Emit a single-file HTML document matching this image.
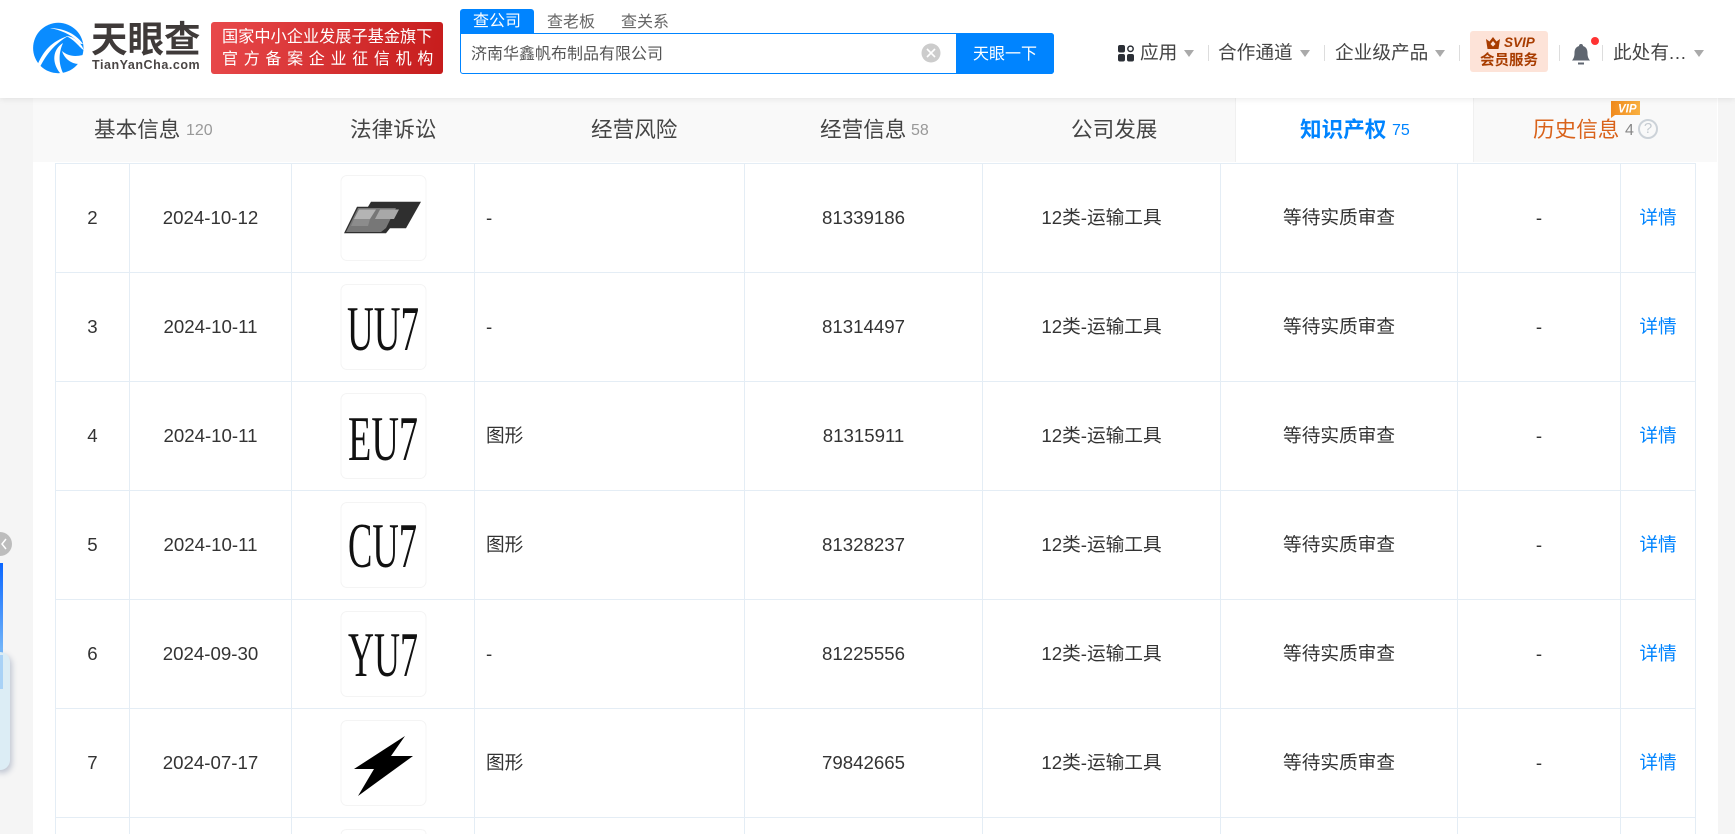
<!DOCTYPE html>
<html lang="zh">
<head>
<meta charset="utf-8">
<title>天眼查</title>
<style>
*{box-sizing:border-box}
html,body{margin:0;padding:0;width:1735px;height:834px;overflow:hidden;background:#f5f5f5}
body{position:relative;font-family:"Liberation Sans","Noto Sans CJK SC",sans-serif;color:#333}
.a{position:absolute;white-space:nowrap}
#hd{position:absolute;left:0;top:0;width:1735px;height:98px;background:#fff;box-shadow:0 1px 6px rgba(0,0,0,.09);z-index:5}
#card{position:absolute;left:33px;top:98px;width:1685px;height:736px;background:#fff}
#tabs{position:absolute;left:33px;top:98px;width:1684px;height:64px;background:#f9f9f9}
.tab{position:absolute;top:98px;font-size:21.6px;line-height:64px;color:#444;white-space:nowrap}
.num{position:absolute;top:98px;font-size:16px;line-height:66px;color:#999;white-space:nowrap}
#tw{position:absolute;left:55px;top:163px;width:1641px;height:671px;overflow:hidden}
table{width:1640px;border-collapse:collapse;table-layout:fixed;font-size:18.67px;color:#333}
td{border:1px solid #e4edf5;height:109px;padding:0 0 1px;text-align:center;vertical-align:middle}
td.c{padding-bottom:4px}
td.l{text-align:left;padding-left:11px}
td a{color:#0084ff;text-decoration:none}
tr.last td{height:16px;border-bottom:0;padding:0}
.nav{position:absolute;top:53px;transform:translateY(-50%);font-size:18.67px;color:#444;white-space:nowrap;line-height:24px}
.arr{position:absolute;top:50px;width:0;height:0;border-left:5.5px solid transparent;border-right:5.5px solid transparent;border-top:7px solid #aaa}
.sep{position:absolute;top:45px;width:1px;height:16px;background:#ddd}
</style>
</head>
<body>
<div id="card"></div>
<div id="tabs"></div>
<div class="a" style="left:1235px;top:98px;width:239px;height:64px;background:#fff;border-left:1px solid #f0f0f0;border-right:1px solid #f0f0f0"></div>

<div class="tab" style="left:94px">基本信息</div><div class="num" style="left:186px">120</div>
<div class="tab" style="left:350px">法律诉讼</div>
<div class="tab" style="left:591px">经营风险</div>
<div class="tab" style="left:820px">经营信息</div><div class="num" style="left:911px">58</div>
<div class="tab" style="left:1071px">公司发展</div>
<div class="tab" style="left:1300px;color:#0084ff;font-weight:700">知识产权</div><div class="num" style="left:1392px;color:#0084ff">75</div>
<div class="tab" style="left:1533px;color:#d9621a">历史信息</div><div class="num" style="left:1625px;color:#888">4</div>
<div class="a" style="left:1638px;top:119px;width:20px;height:20px;border:2px solid #ccd2d8;border-radius:50%;color:#c4cad0;font-size:15px;line-height:16px;text-align:center">?</div>
<svg class="a" style="left:1610px;top:100px" width="32" height="19" viewBox="0 0 32 19">
<defs><linearGradient id="v" x1="0" x2="1"><stop offset="0" stop-color="#f08a1d"/><stop offset="1" stop-color="#f9b040"/></linearGradient></defs>
<path d="M1 1H30V15H5L1 18Z" fill="url(#v)"/>
<text x="8" y="12.500" font-family="Liberation Sans" font-size="11.500" font-weight="700" font-style="italic" fill="#fff">VIP</text>
</svg>

<div id="tw">
<table>
<colgroup><col style="width:74px"><col style="width:162px"><col style="width:183px"><col style="width:270px"><col style="width:238px"><col style="width:238px"><col style="width:237px"><col style="width:163px"><col style="width:75px"></colgroup>
<tr><td>2</td><td>2024-10-12</td><td></td><td class="l">-</td><td>81339186</td><td class="c">12类-运输工具</td><td class="c">等待实质审查</td><td>-</td><td class="c"><a>详情</a></td></tr>
<tr><td>3</td><td>2024-10-11</td><td></td><td class="l">-</td><td>81314497</td><td class="c">12类-运输工具</td><td class="c">等待实质审查</td><td>-</td><td class="c"><a>详情</a></td></tr>
<tr><td>4</td><td>2024-10-11</td><td></td><td class="l c">图形</td><td>81315911</td><td class="c">12类-运输工具</td><td class="c">等待实质审查</td><td>-</td><td class="c"><a>详情</a></td></tr>
<tr><td>5</td><td>2024-10-11</td><td></td><td class="l c">图形</td><td>81328237</td><td class="c">12类-运输工具</td><td class="c">等待实质审查</td><td>-</td><td class="c"><a>详情</a></td></tr>
<tr><td>6</td><td>2024-09-30</td><td></td><td class="l">-</td><td>81225556</td><td class="c">12类-运输工具</td><td class="c">等待实质审查</td><td>-</td><td class="c"><a>详情</a></td></tr>
<tr><td>7</td><td>2024-07-17</td><td></td><td class="l c">图形</td><td>79842665</td><td class="c">12类-运输工具</td><td class="c">等待实质审查</td><td>-</td><td class="c"><a>详情</a></td></tr>
<tr class="last"><td></td><td></td><td></td><td></td><td></td><td></td><td></td><td></td><td></td></tr>
</table>
</div>

<svg class="a" style="left:0;top:0" width="1735" height="834" viewBox="0 0 1735 834">
<g fill="#fff" stroke="#f4f4f4" stroke-width="1">
<rect x="341" y="175.500" width="85" height="85" rx="6"/>
<rect x="341" y="284.500" width="85" height="85" rx="6"/>
<rect x="341" y="393.500" width="85" height="85" rx="6"/>
<rect x="341" y="502.500" width="85" height="85" rx="6"/>
<rect x="341" y="611.500" width="85" height="85" rx="6"/>
<rect x="341" y="720.500" width="85" height="85" rx="6"/>
<path d="M341 834V835.500Q341 829.500 347 829.500H420Q426 829.500 426 834" fill="none"/>
</g>
<path d="M371 201.700H421L406 228.300H390L386 233.300H344L357 206.700H368Z" fill="#2f2f2f"/>
<path d="M358 208H396L386 228L381 232H346Z" fill="#777"/>
<path d="M359 209.500H376L370 219H354Z" fill="#b4b4b4"/>
<path d="M380 209.500H399L394 219H375Z" fill="#a8a8a8"/>
<path d="M354 219H370L368 226H351Z" fill="#8c8c8c"/>
<g font-family="Liberation Serif" font-size="64" fill="#111">
<text x="347" y="350" textLength="72" lengthAdjust="spacingAndGlyphs">UU7</text>
<text x="348" y="460" textLength="70" lengthAdjust="spacingAndGlyphs">EU7</text>
<text x="348" y="567" textLength="69" lengthAdjust="spacingAndGlyphs">CU7</text>
<text x="348" y="676" textLength="70" lengthAdjust="spacingAndGlyphs">YU7</text>
</g>
<path d="M405 736L354 769H374L358 796L413 756H391Z" fill="#000"/>
</svg>

<!-- left floating -->
<div class="a" style="left:-12px;top:532px;width:24px;height:24px;border-radius:50%;background:#bdbdbd"></div>
<svg class="a" style="left:0;top:537px" width="8" height="14"><path d="M6 2L2 7L6 12" fill="none" stroke="#fff" stroke-width="1.500"/></svg>
<div class="a" style="left:0;top:563px;width:3px;height:95px;background:linear-gradient(#0a66ff,#7dbcf8)"></div>
<div class="a" style="left:-10px;top:652px;width:20px;height:118px;border-radius:10px;background:#dcedf5;box-shadow:2px 3px 6px rgba(70,90,130,.3)"></div>
<div class="a" style="left:0;top:655px;width:3px;height:34px;background:#a9d2f6"></div>

<div id="hd">
<svg class="a" style="left:0;top:0" width="90" height="90" viewBox="0 0 90 90">
<circle cx="58.300" cy="48" r="25.200" fill="#0a8cff"/>
<path d="M50 28C60 28 75 32 83 44C80 44 79 43 78 42C71 34 60 30 50 28Z" fill="#fff"/>
<path d="M78 42C81 44 83 47 83.500 50C79 47 75 40 66 36C70 36 75 38 78 42Z" fill="#fff"/>
<path d="M37 66C43 51 52 41 68 36C55 44 47 53 39.500 68Z" fill="#fff"/>
<path d="M60 73C52 63 52 50 63 43C59 52 58 62 63 73Z" fill="#fff"/>
<path d="M79 64C71 64 64 58 62 51C68 56 74 57 83 55C82 59 81 61 79 64Z" fill="#fff"/>
</svg>
<div class="a" style="left:91px;top:16px;font-size:36.500px;line-height:42px;font-weight:700;color:#3f3a39;font-family:'Noto Sans CJK SC',sans-serif">天眼查</div>
<div class="a" style="left:92px;top:58px;font-size:12.500px;line-height:14px;font-weight:700;color:#4a4544;letter-spacing:.55px">TianYanCha.com</div>
<div class="a" style="left:211px;top:22px;width:232px;height:52px;border-radius:3px;background:linear-gradient(100deg,#e8494b,#c61c1c)"></div>
<div class="a" style="left:222px;top:26px;font-size:16.200px;line-height:22px;color:#fff">国家中小企业发展子基金旗下</div>
<div class="a" style="left:222px;top:49px;font-size:16px;line-height:22px;color:#fff;letter-spacing:5.700px">官方备案企业征信机构</div>

<div class="a" style="left:460px;top:9px;width:74px;height:25px;background:#0084ff;border-radius:3px 3px 0 0;color:#fff;font-size:16px;line-height:25px;text-align:center">查公司</div>
<div class="a" style="left:547px;top:9px;font-size:16px;line-height:27px;color:#666">查老板</div>
<div class="a" style="left:621px;top:9px;font-size:16px;line-height:27px;color:#666">查关系</div>
<div class="a" style="left:460px;top:33px;width:594px;height:41px;border:1px solid #0084ff;border-radius:0 3px 3px 3px;background:#fff"></div>
<div class="a" style="left:471px;top:33px;font-size:16px;line-height:44px;color:#555">济南华鑫帆布制品有限公司</div>
<svg class="a" style="left:921px;top:43px" width="20" height="20"><circle cx="10" cy="10" r="9.500" fill="#ccc"/><path d="M6 6L14 14M14 6L6 14" stroke="#fff" stroke-width="1.600"/></svg>
<div class="a" style="left:956px;top:33px;width:98px;height:41px;background:#0084ff;border-radius:0 3px 3px 0;color:#fff;font-size:16px;line-height:43px;text-align:center">天眼一下</div>

<svg class="a" style="left:1117px;top:44px" width="18" height="18"><g fill="#2b2f36"><rect x="1" y="1" width="7" height="7.500" rx="2"/><rect x="1" y="10" width="7" height="7.500" rx="2"/><rect x="10" y="10" width="7" height="7.500" rx="2"/><circle cx="13.500" cy="4.800" r="2.700" fill="none" stroke="#2b2f36" stroke-width="1.500"/></g></svg>
<div class="nav" style="left:1140px">应用</div><div class="arr" style="left:1184px"></div><div class="sep" style="left:1208px"></div>
<div class="nav" style="left:1218px">合作通道</div><div class="arr" style="left:1300px"></div><div class="sep" style="left:1324px"></div>
<div class="nav" style="left:1335px">企业级产品</div><div class="arr" style="left:1435px"></div><div class="sep" style="left:1459px"></div>

<div class="a" style="left:1470px;top:31px;width:78px;height:41px;background:#fde3d8;border-radius:3px"></div>
<svg class="a" style="left:1485px;top:36px" width="16" height="14"><path d="M1 3L4.500 5.500L8 1L11.500 5.500L15 3L13.500 13H2.500Z" fill="#a83c00"/><path d="M8 5L10.500 8L8 10.500L5.500 8Z" fill="#fde3d8"/></svg>
<div class="a" style="left:1504px;top:34px;font-size:13.500px;line-height:18px;font-weight:700;font-style:italic;color:#a83c00">SVIP</div>
<div class="a" style="left:1480px;top:52px;font-size:14.500px;line-height:18px;font-weight:700;color:#a83c00">会员服务</div>
<div class="sep" style="left:1559px"></div>
<svg class="a" style="left:1570px;top:42px" width="22" height="24"><path d="M11 2C12.500 2 13 3 13 4C16.500 5 17.500 8 17.500 11C17.500 14 18 16 20 18.500H2C4 16 4.500 14 4.500 11C4.500 8 5.500 5 9 4C9 3 9.500 2 11 2Z" fill="#5f6670"/><rect x="8" y="20.500" width="6" height="2" fill="#5f6670"/></svg>
<div class="a" style="left:1591px;top:37px;width:8px;height:8px;border-radius:50%;background:#f33"></div>
<div class="sep" style="left:1602px"></div>
<div class="nav" style="left:1613px">此处有<span style="letter-spacing:.7px">...</span></div><div class="arr" style="left:1694px"></div>
</div>
</body>
</html>
